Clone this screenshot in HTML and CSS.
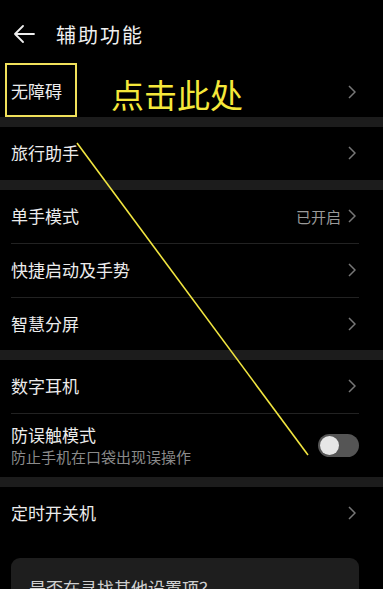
FILE: index.html
```html
<!DOCTYPE html>
<html lang="zh">
<head>
<meta charset="utf-8">
<link rel="stylesheet" href="styles.css">
</head>
<body>
<div class="page">
  <header class="header">
    <svg class="back" width="22" height="18" viewBox="0 0 22 18"><path d="M10 1 L2 9 L10 17 M2 9 H21" fill="none" stroke="#eee" stroke-width="1.8" stroke-linecap="round" stroke-linejoin="round"/></svg>
    <span class="title">辅助功能</span>
  </header>

  <section class="group">
    <div class="row first"><span class="label">无障碍</span><span class="right"><svg class="chev" width="8" height="14" viewBox="0 0 8 14"><path d="M1 1 L7 7 L1 13" fill="none" stroke="#777" stroke-width="1.5"/></svg></span></div>
  </section>
  <div class="sep"></div>
  <section class="group">
    <div class="row"><span class="label">旅行助手</span><span class="right"><svg class="chev" width="8" height="14" viewBox="0 0 8 14"><path d="M1 1 L7 7 L1 13" fill="none" stroke="#777" stroke-width="1.5"/></svg></span></div>
  </section>
  <div class="sep"></div>
  <section class="group">
    <div class="row"><span class="label">单手模式</span><span class="right"><span class="value">已开启</span><svg class="chev" width="8" height="14" viewBox="0 0 8 14"><path d="M1 1 L7 7 L1 13" fill="none" stroke="#777" stroke-width="1.5"/></svg></span></div>
    <div class="row"><span class="label">快捷启动及手势</span><span class="right"><svg class="chev" width="8" height="14" viewBox="0 0 8 14"><path d="M1 1 L7 7 L1 13" fill="none" stroke="#777" stroke-width="1.5"/></svg></span></div>
    <div class="row"><span class="label">智慧分屏</span><span class="right"><svg class="chev" width="8" height="14" viewBox="0 0 8 14"><path d="M1 1 L7 7 L1 13" fill="none" stroke="#777" stroke-width="1.5"/></svg></span></div>
  </section>
  <div class="sep"></div>
  <section class="group">
    <div class="row"><span class="label">数字耳机</span><span class="right"><svg class="chev" width="8" height="14" viewBox="0 0 8 14"><path d="M1 1 L7 7 L1 13" fill="none" stroke="#777" stroke-width="1.5"/></svg></span></div>
    <div class="row tall">
      <span class="texts"><span class="label">防误触模式</span><span class="sub">防止手机在口袋出现误操作</span></span>
      <span class="toggle"><span class="knob"></span></span>
    </div>
  </section>
  <div class="sep"></div>
  <section class="group">
    <div class="row"><span class="label">定时开关机</span><span class="right"><svg class="chev" width="8" height="14" viewBox="0 0 8 14"><path d="M1 1 L7 7 L1 13" fill="none" stroke="#777" stroke-width="1.5"/></svg></span></div>
  </section>
  <div class="card"><span class="card-text">是否在寻找其他设置项？</span></div>

  <div class="annot-box"></div>
  <div class="annot-text">点击此处</div>
  <svg class="annot-line" width="383" height="589" viewBox="0 0 383 589"><line x1="77" y1="143" x2="308" y2="455" stroke="#f2e640" stroke-width="1.6"/></svg>
</div>
</body>
</html>
```

FILE: styles.css
```css
* { box-sizing: border-box; }
html, body { margin: 0; padding: 0; background: #000; }
body {
  font-family: "Noto Sans CJK SC", "Noto Sans", sans-serif;
  color: #eaeaea;
  width: 383px;
  height: 589px;
  overflow: hidden;
}
.page { position: relative; width: 383px; height: 589px; overflow: hidden; }
.header {
  height: 63px;
  display: flex;
  align-items: center;
  padding: 5px 0 0 13px;
}
.back { display: block; margin-right: 21px; }
.title { font-size: 20px; color: #f0f0f0; letter-spacing: 2px; }
.group { padding: 0 24px 0 11px; }
.row {
  height: 53.5px;
  display: flex;
  align-items: center;
  justify-content: space-between;
  border-top: 1px solid #222;
}
.group .row:first-child { border-top: none; }
.row.first { height: 54px; padding-top: 3px; }
.label { font-size: 17px; color: #ececec; line-height: 1.2; }
.right { display: flex; align-items: center; gap: 7px; margin-right: 3px; }
.value { font-size: 15px; color: #9a9a9a; }
.chev { display: block; }
.row.tall { height: 64px; align-items: center; }
.texts { display: flex; flex-direction: column; gap: 2px; }
.sub { font-size: 15px; color: #8a8a8a; line-height: 1.3; }
.toggle {
  width: 41px;
  height: 23px;
  border-radius: 12px;
  background: #555;
  display: flex;
  align-items: center;
  padding-left: 2px;
}
.knob { width: 19px; height: 19px; border-radius: 50%; background: #e6e6e6; }
.sep { height: 9.5px; background: #1c1c1c; }
.card {
  margin: 18px 24px 0 11px;
  height: 60px;
  background: #1e1e1e;
  border-radius: 9px;
  padding: 17px 0 0 18px;
}
.card-text { font-size: 17px; color: #d0d0d0; }
.annot-box {
  position: absolute;
  left: 5px; top: 63px;
  width: 72px; height: 54px;
  border: 2px solid #f0e05a;
}
.annot-text {
  position: absolute;
  left: 111px; top: 72px;
  font-size: 33px;
  line-height: 44px;
  color: #f5e83a;
}
.annot-line { position: absolute; left: 0; top: 0; pointer-events: none; }
```
